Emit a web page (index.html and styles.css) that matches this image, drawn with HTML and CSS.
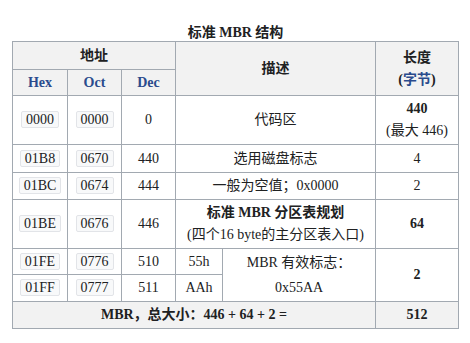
FILE: index.html
```html
<!DOCTYPE html>
<html lang="zh">
<head>
<meta charset="utf-8">
<link rel="stylesheet" href="styles.css">
</head>
<body>
<div class="page">
<table class="mbr">
  <caption>标准 MBR 结构</caption>
  <colgroup>
    <col class="c-hex"><col class="c-oct"><col class="c-dec"><col class="c-da"><col class="c-db"><col class="c-len">
  </colgroup>
  <thead>
    <tr class="h1">
      <th colspan="3">地址</th>
      <th colspan="2" rowspan="2">描述</th>
      <th rowspan="2" class="two">长度<br>(<span class="link">字节</span>)</th>
    </tr>
    <tr class="h2">
      <th class="sub">Hex</th>
      <th class="sub">Oct</th>
      <th class="sub">Dec</th>
    </tr>
  </thead>
  <tbody>
    <tr class="tall">
      <td><code>0000</code></td>
      <td><code>0000</code></td>
      <td>0</td>
      <td colspan="2">代码区</td>
      <td class="two"><b>440</b><br>(最大 446)</td>
    </tr>
    <tr class="r28">
      <td><code>01B8</code></td>
      <td><code>0670</code></td>
      <td>440</td>
      <td colspan="2">选用磁盘标志</td>
      <td>4</td>
    </tr>
    <tr class="r27">
      <td><code>01BC</code></td>
      <td><code>0674</code></td>
      <td>444</td>
      <td colspan="2">一般为空值；0x0000</td>
      <td>2</td>
    </tr>
    <tr class="tall">
      <td><code>01BE</code></td>
      <td><code>0676</code></td>
      <td>446</td>
      <td colspan="2" class="two"><b>标准 MBR 分区表规划</b><br>(四个16 byte的主分区表入口)</td>
      <td><b>64</b></td>
    </tr>
    <tr class="r26">
      <td><code>01FE</code></td>
      <td><code>0776</code></td>
      <td>510</td>
      <td>55h</td>
      <td rowspan="2" class="sig">MBR 有效标志：<br>0x55AA</td>
      <td rowspan="2"><b>2</b></td>
    </tr>
    <tr class="r27">
      <td><code>01FF</code></td>
      <td><code>0777</code></td>
      <td>511</td>
      <td>AAh</td>
    </tr>
  </tbody>
  <tfoot>
    <tr class="r27">
      <th colspan="5">MBR，总大小：446 + 64 + 2 =</th>
      <th>512</th>
    </tr>
  </tfoot>
</table>
</div>
</body>
</html>
```
FILE: styles.css
```css
html, body {
  margin: 0;
  padding: 0;
  background: #ffffff;
}

.page {
  padding: 24px 13px 0 12px;
  font-family: "Liberation Serif", "Noto Sans CJK SC", serif;
  font-size: 14px;
  color: #202122;
}

.mbr {
  width: 446px;
  border-collapse: collapse;
  table-layout: fixed;
  border: 1px solid #a2a9b1;
}

.mbr caption {
  font-weight: bold;
  line-height: 17px;
  text-align: center;
  padding: 0;
}

.c-hex { width: 55px; }
.c-oct { width: 54px; }
.c-dec { width: 54px; }
.c-da { width: 47px; }
.c-db { width: 153px; }
.c-len { width: 83px; }

.mbr th,
.mbr td {
  border: 1px solid #a2a9b1;
  padding: 0 4px;
  text-align: center;
  vertical-align: middle;
  line-height: 20px;
}

.mbr th {
  background: #f2f2f2;
  font-weight: bold;
}

.mbr td {
  background: #ffffff;
}

.mbr .sub {
  color: #2a4b8d;
}

.link {
  color: #2a4b8d;
}

.h1 { height: 28px; }
.h2 { height: 26px; }
.tall { height: 49px; }
.r28 { height: 28px; }
.r27 { height: 27px; }
.r26 { height: 26px; }

.mbr .two {
  line-height: 22px;
}

.mbr .sig {
  line-height: 25px;
}

code {
  font-family: "Liberation Serif", "Noto Sans CJK SC", serif;
  font-size: 14px;
  display: inline-block;
  line-height: 15px;
  padding: 0 4px;
  background: #f8f9fa;
  border: 1px solid #e2e4e8;
  border-radius: 2px;
  color: #202122;
}
```
